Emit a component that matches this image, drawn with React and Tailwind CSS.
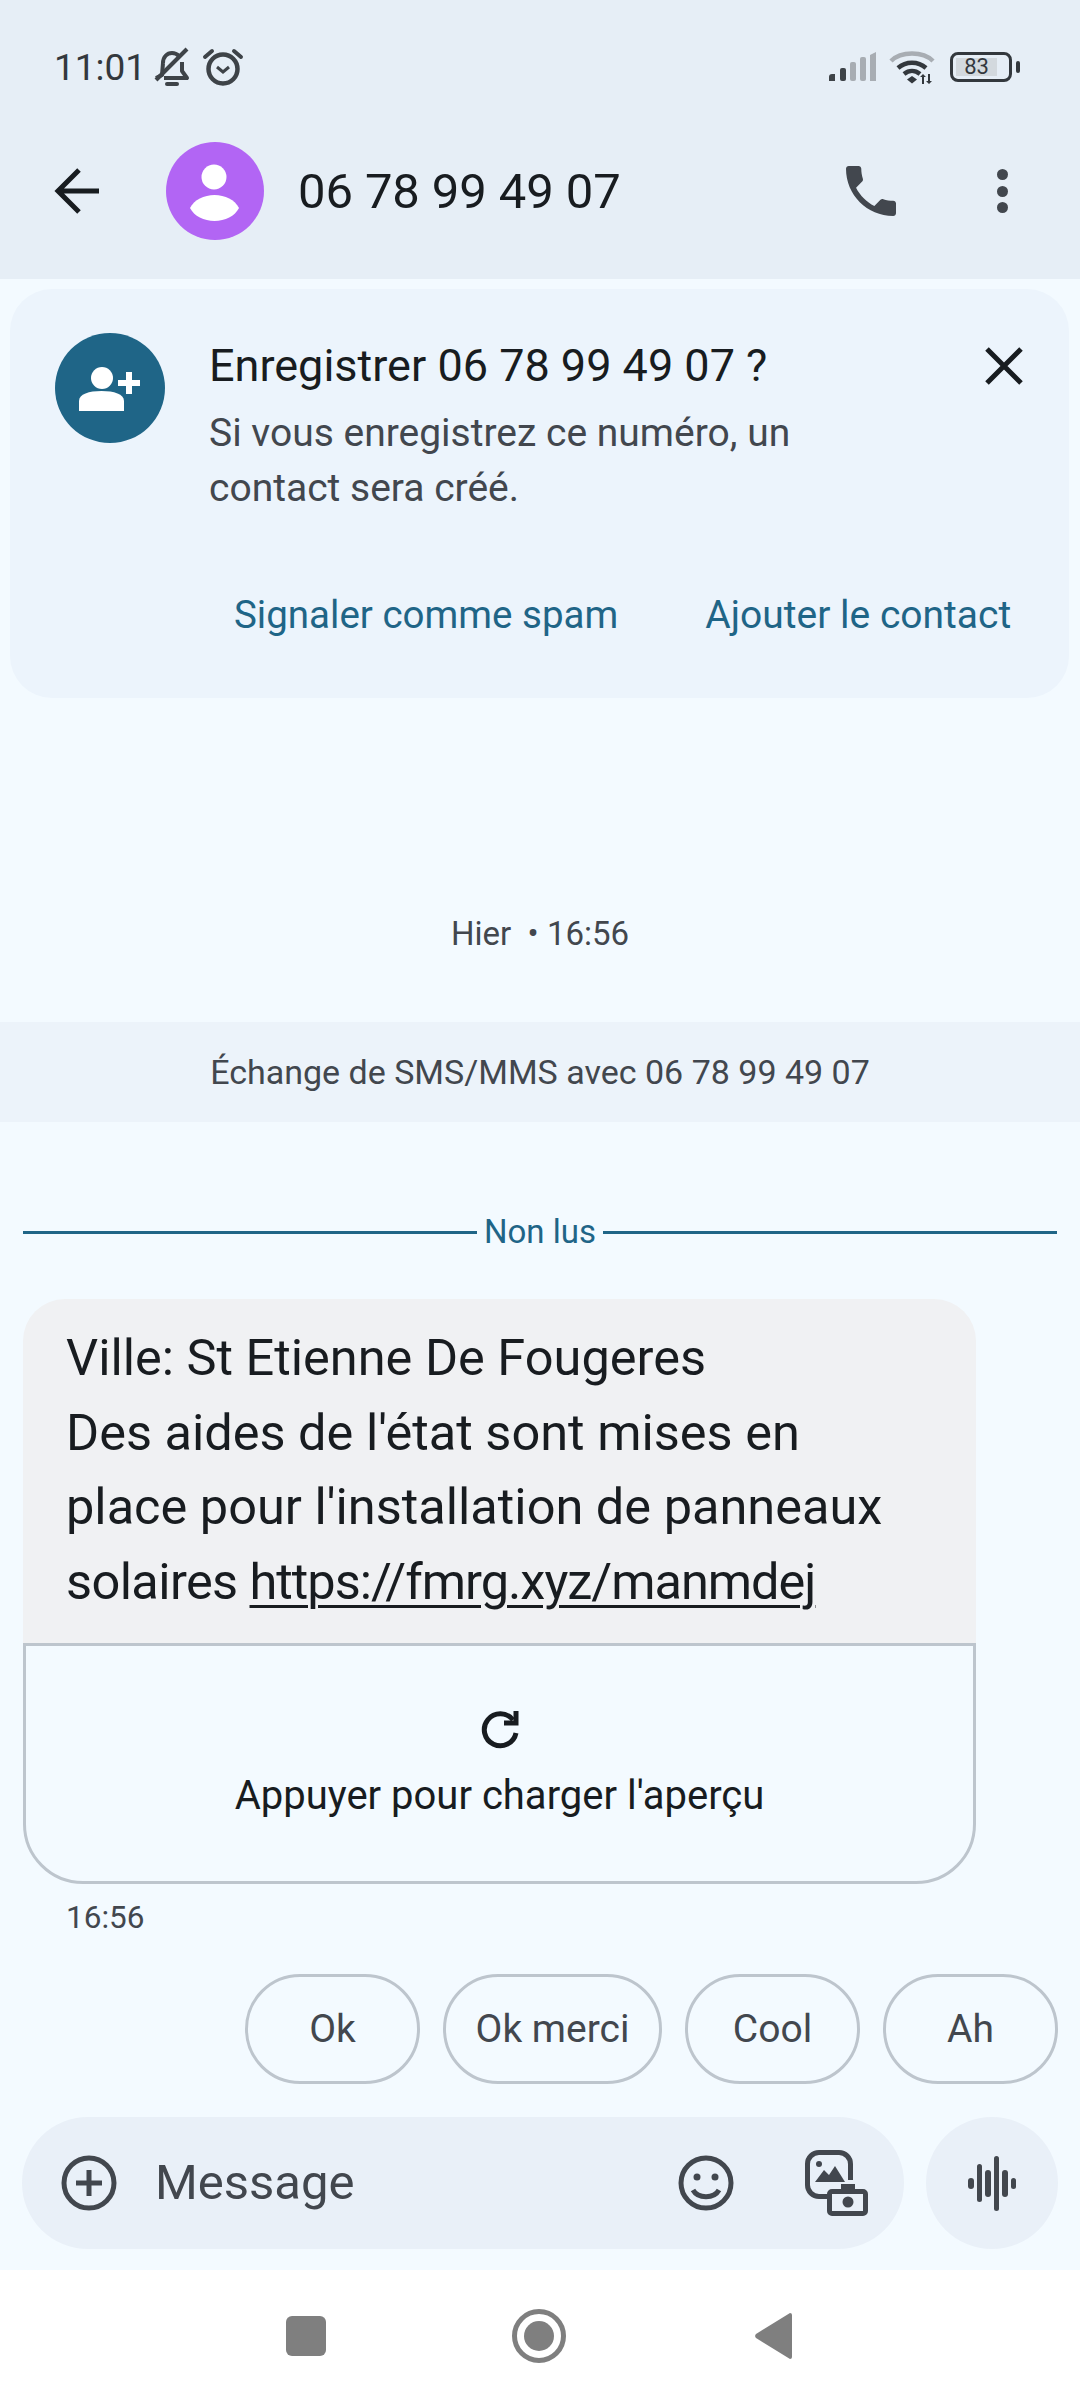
import React from 'react';

function StatusIcons() {
  return (
    <div className="flex items-center">
      <svg width="50" height="32" viewBox="0 0 50 32" className="mr-[11px]">
        <path d="M1 30v-4a3 3 0 0 1 3-3h3v7z" fill="#3e4348" />
        <rect x="12" y="17" width="6" height="13" rx="2" fill="#3e4348" />
        <rect x="22" y="11" width="6" height="19" rx="2" fill="#a8adb3" />
        <rect x="32" y="6" width="6" height="24" rx="2" fill="#a8adb3" />
        <path d="M42 4l6-3v29h-6z" fill="#a8adb3" />
      </svg>
      <svg width="48" height="36" viewBox="0 0 48 36" className="mr-[13px]">
        <path d="M2 12C12 2 34 2 44 12" fill="none" stroke="#a8adb3" strokeWidth="4.5" />
        <path d="M9 19c8-7 20-7 28 0" fill="none" stroke="#33383d" strokeWidth="4.5" />
        <path d="M15 25c5-4 11-4 16 0" fill="none" stroke="#33383d" strokeWidth="4.5" />
        <path d="M23 27l-5 3.500 5 4 5-4z" fill="#33383d" />
        <path d="M33 35v-7h-2l3-3 3 3h-2v7zM41 25v7h2l-3 3-3-3h2v-7z" fill="#33383d" />
      </svg>
      <div className="w-[62px] h-[30px] rounded-[8px] border-[3px] border-[#33383d] p-[3px] flex items-center">
        <div className="w-[41px] h-[18px] bg-[#d3d9de] flex items-center justify-center text-[22px] leading-none text-[#33383d]">83</div>
      </div>
      <div className="w-[4px] h-[12px] ml-[4px] rounded-sm bg-[#33383d]" />
    </div>
  );
}

function Chip({ label, width }) {
  return (
    <div className={`${width} h-[110px] rounded-[55px] border-[3px] border-[#bdc5cd] flex items-center justify-center text-[39px] text-[#42474e]`}>
      {label}
    </div>
  );
}

export default function App() {
  return (
    <div className="w-[1080px] h-[2400px] flex flex-col bg-[#f3faff] font-['Roboto',sans-serif] overflow-hidden">
      <div className="h-[279px] bg-[#e6eef6] flex flex-col">
        <div className="h-[134px] pl-[54px] pr-[60px] flex items-center justify-between">
          <div className="flex items-center">
            <span className="text-[37px] leading-none text-[#33383d]">11:01</span>
            <svg width="40" height="42" viewBox="0 0 40 42" className="ml-[6px]" fill="none" stroke="#3e4348" strokeWidth="4" strokeLinejoin="round">
              <path d="M11 17c0-6 4-10 9-10 3 0 5 1 7 3M30 16v9l5 7H12M4 32l6-3 1-12" />
              <path d="M4 34L35 3" />
              <path d="M15 38h10" strokeWidth="4" strokeLinecap="round" />
            </svg>
            <svg width="42" height="40" viewBox="0 0 42 40" className="ml-[10px]" fill="none" stroke="#3e4348" strokeWidth="3.500">
              <circle cx="21" cy="22" r="14.500" strokeWidth="4.500" />
              <path d="M15 20l6 5 6-5" strokeWidth="3" />
              <path d="M3 10l7-6M39 10l-7-6" strokeWidth="4" strokeLinecap="round" />
            </svg>
          </div>
          <StatusIcons />
        </div>
        <div className="flex-1 flex items-center pb-[31px]">
          <svg width="50" height="48" viewBox="0 0 50 48" className="ml-[53px]" fill="none" stroke="#181c20" strokeWidth="5">
            <path d="M46 24H6M26 3L5 24l21 21" />
          </svg>
          <svg width="98" height="98" viewBox="0 0 98 98" className="ml-[63px] shrink-0">
            <circle cx="49" cy="49" r="49" fill="#b265f4" />
            <circle cx="48" cy="35" r="12.500" fill="#fff" />
            <path d="M24 66C28 58 38 53 48.500 53S69 58 73 66C69 74 59 79 48.500 79S28 74 24 66z" fill="#fff" />
          </svg>
          <span className="ml-[34px] w-[322px] whitespace-nowrap text-[49px] tracking-[-0.1px] leading-none text-[#181c20]">06 78 99 49 07</span>
          <svg width="50" height="50" viewBox="3 3 18 18" fill="#42474e" className="ml-[226px]">
            <path d="M6.620 10.790c1.440 2.830 3.760 5.140 6.590 6.590l2.200-2.200c.27-.27.67-.36 1.020-.24 1.120.37 2.330.57 3.570.57.55 0 1 .45 1 1V20c0 .55-.45 1-1 1-9.390 0-17-7.610-17-17 0-.55.45-1 1-1h3.500c.55 0 1 .45 1 1 0 1.250.2 2.450.57 3.570.11.35.03.74-.25 1.020l-2.200 2.200z" />
          </svg>
          <div className="ml-[101px] flex flex-col gap-[5.500px]">
            <div className="w-[11px] h-[11px] rounded-full bg-[#42474e]" />
            <div className="w-[11px] h-[11px] rounded-full bg-[#42474e]" />
            <div className="w-[11px] h-[11px] rounded-full bg-[#42474e]" />
          </div>
        </div>
      </div>

      <div className="ml-[10px] mr-[11px] mt-[10px] h-[409px] rounded-[42px] bg-[#ecf4fc] relative pl-[45px] pt-[44px] flex">
        <svg width="110" height="110" viewBox="0 0 110 110" className="shrink-0">
          <circle cx="55" cy="55" r="55" fill="#1f6587" />
          <circle cx="47" cy="45" r="11" fill="#fff" />
          <path d="M24 78V68c0-7 10-10 22.500-10S69 61 69 68v10z" fill="#fff" />
          <path d="M71 39h6v8h8v6h-8v8h-6v-8h-8v-6h8z" fill="#fff" />
        </svg>
        <div className="ml-[44px] flex-1">
          <div className="text-[45px] leading-[54px] text-[#181c20] mt-[6px]">Enregistrer 06 78 99 49 07 ?</div>
          <div className="text-[39px] leading-[55px] text-[#42474e] mt-[13px]">
            Si vous enregistrez ce numéro, un<br />contact sera créé.
          </div>
          <div className="mt-[72px] flex leading-[54px] text-[#1f6587] pl-[25px] gap-[87px]">
            <span className="text-[38.500px]">Signaler comme spam</span>
            <span className="text-[39px]">Ajouter le contact</span>
          </div>
        </div>
        <svg width="38" height="38" viewBox="0 0 38 38" fill="none" stroke="#181c20" strokeWidth="5" className="absolute right-[46px] top-[58px]">
          <path d="M2 2l34 34M36 2L2 36" />
        </svg>
      </div>

      <div className="mt-[211px] text-center text-[33px] leading-[50px] text-[#42474e]">Hier &nbsp;• 16:56</div>

      <div className="mt-[63px] h-[100px] bg-[#ecf3fa] flex items-center justify-center text-[34px] text-[#42474e]">
        Échange de SMS/MMS avec 06 78 99 49 07
      </div>

      <div className="mt-[85px] mx-[23px] h-[50px] flex items-center gap-[7px] text-[33px] text-[#1f6587]">
        <div className="flex-1 h-[3px] bg-[#1f6587]" />
        <span>Non lus</span>
        <div className="flex-1 h-[3px] bg-[#1f6587]" />
      </div>

      <div className="mt-[42px] ml-[23px] w-[953px]">
        <div className="h-[344px] bg-[#f0f1f3] rounded-t-[42px] pl-[43px] pt-[22px] text-[50.500px] leading-[74.500px] text-[#181c20]">
          Ville: St Etienne De Fougeres<br />
          Des aides de l'état sont mises en<br />
          place pour l'installation de panneaux<br />
          <span className="tracking-[-0.6px]">solaires </span><span className="underline decoration-[3px] underline-offset-[6px] tracking-[-1px]">https://fmrg.xyz/manmdej</span>
        </div>
        <div className="h-[241px] border-[3px] border-[#bdc5cd] rounded-b-[60px] flex flex-col items-center pt-[63px]">
          <svg width="40" height="40" viewBox="0 0 40 40" fill="none" stroke="#181c20" strokeWidth="5">
            <path d="M33 11a16 16 0 1 0 3 13" />
            <path d="M36 2v12H24" />
          </svg>
          <div className="mt-[22px] text-[40px] leading-[50px] text-[#181c20]">Appuyer pour charger l'aperçu</div>
        </div>
      </div>

      <div className="ml-[66px] mt-[9px] text-[31.500px] leading-[50px] text-[#42474e]">16:56</div>

      <div className="mt-[31px] mr-[22px] flex justify-end gap-[23px]">
        <Chip label="Ok" width="w-[175px]" />
        <Chip label="Ok merci" width="w-[219px]" />
        <Chip label="Cool" width="w-[175px]" />
        <Chip label="Ah" width="w-[175px]" />
      </div>

      <div className="mt-[33px] mx-[22px] flex gap-[22px]">
        <div className="w-[882px] h-[132px] rounded-full bg-[#e9f0f8] flex items-center">
          <svg width="56" height="56" viewBox="0 0 56 56" fill="none" stroke="#42474e" strokeWidth="5" className="ml-[39px] shrink-0">
            <circle cx="28" cy="28" r="25" />
            <path d="M28 15v26M15 28h26" />
          </svg>
          <span className="ml-[38px] w-[208px] text-[49px] text-[#42474e]">Message</span>
          <svg width="56" height="56" viewBox="0 0 56 56" fill="none" stroke="#42474e" strokeWidth="5" className="ml-[315px] shrink-0">
            <circle cx="28" cy="28" r="25" />
            <circle cx="19" cy="22" r="3.500" fill="#42474e" stroke="none" />
            <circle cx="37" cy="22" r="3.500" fill="#42474e" stroke="none" />
            <path d="M15 35c5 9 21 9 26 0" />
          </svg>
          <svg width="66" height="70" viewBox="0 0 66 70" className="ml-[70px] shrink-0" fill="none">
            <path d="M25 48.500H15A11.500 11.500 0 0 1 3.500 37V16A11.500 11.500 0 0 1 15 4.500h20A11.500 11.500 0 0 1 46.500 16v16" stroke="#42474e" strokeWidth="5" />
            <circle cx="15" cy="16" r="3" fill="#42474e" />
            <path d="M11 34l9-12 5 5 6-9 10 16z" fill="#42474e" />
            <path d="M23 46a5 5 0 0 1 5-5h9v-5h14v5h8a5 5 0 0 1 5 5v17a5 5 0 0 1-5 5H28a5 5 0 0 1-5-5z" fill="#42474e" />
            <rect x="28" y="46" width="31" height="17" fill="#e9f0f8" />
            <circle cx="44" cy="54" r="5.500" fill="#42474e" />
          </svg>
        </div>
        <div className="w-[132px] h-[132px] rounded-full bg-[#e9f0f8] flex items-center justify-center gap-[3px]">
          <div className="w-[5.500px] h-[11px] rounded-full bg-[#42474e]" />
          <div className="w-[5.500px] h-[38px] rounded-full bg-[#42474e]" />
          <div className="w-[5.500px] h-[27px] rounded-full bg-[#42474e]" />
          <div className="w-[5.500px] h-[55px] rounded-full bg-[#42474e]" />
          <div className="w-[5.500px] h-[27px] rounded-full bg-[#42474e]" />
          <div className="w-[5.500px] h-[11px] rounded-full bg-[#42474e]" />
        </div>
      </div>

      <div className="mt-[21px] flex-1 bg-white flex items-start pl-[286px] pt-[39px]">
        <div className="mt-[7px] w-[40px] h-[40px] rounded-[6px] bg-[#7f7f7f]" />
        <div className="ml-[186px] w-[54px] h-[54px] rounded-full border-[5px] border-[#7f7f7f] flex items-center justify-center">
          <div className="w-[30px] h-[30px] rounded-full bg-[#7f7f7f]" />
        </div>
        <svg width="38" height="48" viewBox="0 0 38 48" className="ml-[188px] mt-[3px]" fill="#7f7f7f">
          <path d="M36 1a2 2 0 0 1 2 2v42a2 2 0 0 1-2 2L2 26a3 3 0 0 1 0-4z" />
        </svg>
      </div>
    </div>
  );
}
